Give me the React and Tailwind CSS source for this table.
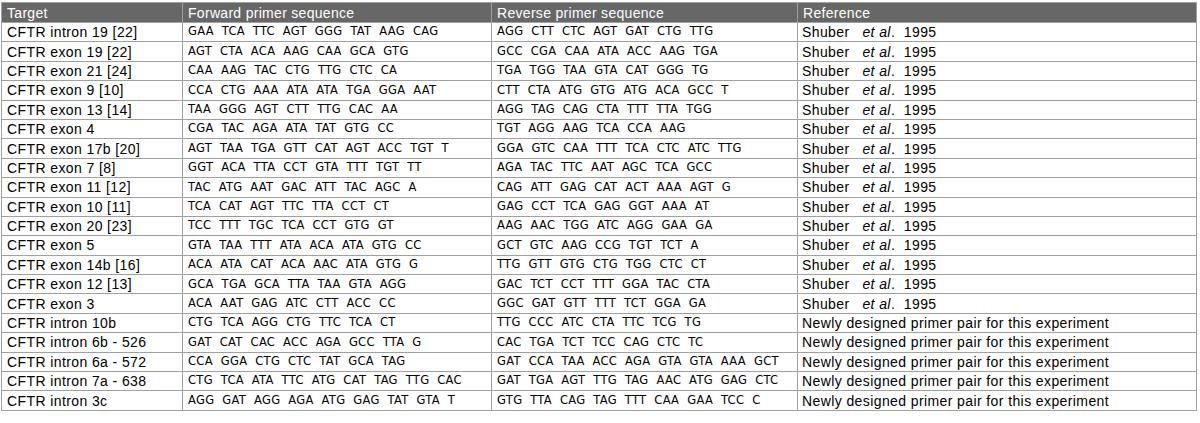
import React from "react";

const S = "Shuber";
const N = "new";
const rows = [
  ["CFTR intron 19 [22]", "GAA TCA TTC AGT GGG TAT AAG CAG", "AGG CTT CTC AGT GAT CTG TTG", S],
  ["CFTR exon 19 [22]", "AGT CTA ACA AAG CAA GCA GTG", "GCC CGA CAA ATA ACC AAG TGA", S],
  ["CFTR exon 21 [24]", "CAA AAG TAC CTG TTG CTC CA", "TGA TGG TAA GTA CAT GGG TG", S],
  ["CFTR exon 9 [10]", "CCA CTG AAA ATA ATA TGA GGA AAT", "CTT CTA ATG GTG ATG ACA GCC T", S],
  ["CFTR exon 13 [14]", "TAA GGG AGT CTT TTG CAC AA", "AGG TAG CAG CTA TTT TTA TGG", S],
  ["CFTR exon 4", "CGA TAC AGA ATA TAT GTG CC", "TGT AGG AAG TCA CCA AAG", S],
  ["CFTR exon 17b [20]", "AGT TAA TGA GTT CAT AGT ACC TGT T", "GGA GTC CAA TTT TCA CTC ATC TTG", S],
  ["CFTR exon 7 [8]", "GGT ACA TTA CCT GTA TTT TGT TT", "AGA TAC TTC AAT AGC TCA GCC", S],
  ["CFTR exon 11 [12]", "TAC ATG AAT GAC ATT TAC AGC A", "CAG ATT GAG CAT ACT AAA AGT G", S],
  ["CFTR exon 10 [11]", "TCA CAT AGT TTC TTA CCT CT", "GAG CCT TCA GAG GGT AAA AT", S],
  ["CFTR exon 20 [23]", "TCC TTT TGC TCA CCT GTG GT", "AAG AAC TGG ATC AGG GAA GA", S],
  ["CFTR exon 5", "GTA TAA TTT ATA ACA ATA GTG CC", "GCT GTC AAG CCG TGT TCT A", S],
  ["CFTR exon 14b [16]", "ACA ATA CAT ACA AAC ATA GTG G", "TTG GTT GTG CTG TGG CTC CT", S],
  ["CFTR exon 12 [13]", "GCA TGA GCA TTA TAA GTA AGG", "GAC TCT CCT TTT GGA TAC CTA", S],
  ["CFTR exon 3", "ACA AAT GAG ATC CTT ACC CC", "GGC GAT GTT TTT TCT GGA GA", S],
  ["CFTR intron 10b", "CTG TCA AGG CTG TTC TCA CT", "TTG CCC ATC CTA TTC TCG TG", N],
  ["CFTR intron 6b - 526", "GAT CAT CAC ACC AGA GCC TTA G", "CAC TGA TCT TCC CAG CTC TC", N],
  ["CFTR intron 6a - 572", "CCA GGA CTG CTC TAT GCA TAG", "GAT CCA TAA ACC AGA GTA GTA AAA GCT", N],
  ["CFTR intron 7a - 638", "CTG TCA ATA TTC ATG CAT TAG TTG CAC", "GAT TGA AGT TTG TAG AAC ATG GAG CTC", N],
  ["CFTR intron 3c", "AGG GAT AGG AGA ATG GAG TAT GTA T", "GTG TTA CAG TAG TTT CAA GAA TCC C", N],
];

const sans = "font-['Liberation_Sans',Arial,sans-serif]";
const seq = "font-['DejaVu_Sans',Verdana,sans-serif]";

function Seq({ s }) {
  return <span className="whitespace-pre">{s.split(" ").join("  ")}</span>;
}

export default function App() {
  return (
    <div className="bg-white w-[1200px] h-[423px] pt-[2px] pl-[1px]">
      <table className="border-collapse border border-[#c8c8c8] table-fixed w-[1195px]">
        <colgroup>
          <col className="w-[181px]" />
          <col className="w-[309px]" />
          <col className="w-[306px]" />
          <col className="w-[399px]" />
        </colgroup>
        <thead>
          <tr className="h-[20px] bg-[#676767] text-white text-[14px] tracking-[0.3px] leading-none">
            {["Target", "Forward primer sequence", "Reverse primer sequence", "Reference"].map((h) => (
              <th key={h} className={`${sans} font-normal text-left px-[5px] border border-[#a0a0a0] align-middle`}>
                {h}
              </th>
            ))}
          </tr>
        </thead>
        <tbody>
          {rows.map((r, i) => (
            <tr key={i} className="h-[19.4px] leading-none text-black">
              <td className={`${sans} text-[14px] tracking-[0.4px] px-[5px] border border-[#a0a0a0] whitespace-nowrap`}>{r[0]}</td>
              <td className={`${seq} text-[11.5px] tracking-[0.3px] px-[5px] border border-[#a0a0a0]`}><Seq s={r[1]} /></td>
              <td className={`${seq} text-[11.5px] tracking-[0.3px] px-[5px] border border-[#a0a0a0]`}><Seq s={r[2]} /></td>
              <td className={`${sans} text-[14px] tracking-[0.4px] px-[4px] border border-[#a0a0a0] whitespace-pre`}>
                {r[3] === S ? (
                  <>Shuber   <i>et al</i>.  1995</>
                ) : (
                  "Newly designed primer pair for this experiment"
                )}
              </td>
            </tr>
          ))}
        </tbody>
      </table>
    </div>
  );
}
